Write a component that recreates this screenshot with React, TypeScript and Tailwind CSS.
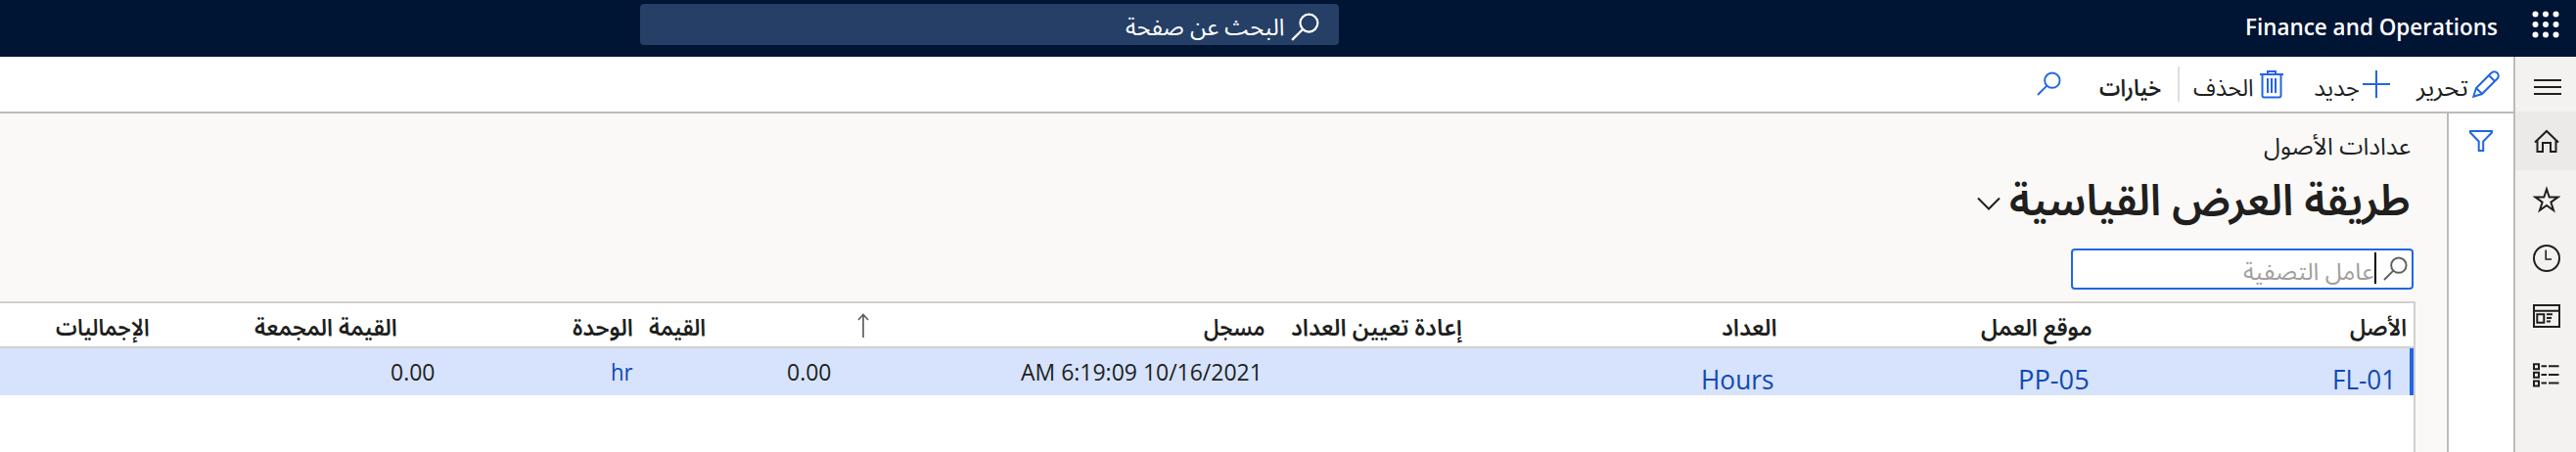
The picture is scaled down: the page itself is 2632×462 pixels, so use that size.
import { useLayoutEffect, useRef, type ReactNode } from "react";

const AR = "font-['Open_Sans','Noto_Sans_Arabic','DejaVu_Sans',sans-serif]";

/** Single line of text stretched or condensed to an exact width. */
function Fit({ w, className = "", children }: { w: number; className?: string; children: ReactNode }) {
  const ref = useRef<HTMLSpanElement>(null);
  useLayoutEffect(() => {
    const el = ref.current;
    if (el) el.style.transform = `scaleX(${w / el.offsetWidth})`;
  }, [w]);
  return (
    <span className={`flex shrink-0 whitespace-nowrap ${className}`} style={{ width: w }}>
      <span ref={ref} className="block shrink-0 origin-right">
        {children}
      </span>
    </span>
  );
}

function Search({ className, sw }: { className: string; sw: number }) {
  return (
    <svg viewBox="0 0 26 26" className={className} fill="none" stroke="currentColor" strokeWidth={sw}>
      <circle cx="16.5" cy="9.5" r="8" />
      <path d="M10.8 15.2 1 25" />
    </svg>
  );
}

const line = { fill: "none", stroke: "currentColor", strokeWidth: 2 } as const;

const columns = [
  { h: "الأصل", hw: 58, col: "w-[322px]", hp: "ps-[7px]", v: "FL-01", vw: 65, vp: "ps-[18px]", kind: "link" },
  { h: "موقع العمل", hw: 114, col: "w-[322px]", hp: "ps-[6px]", v: "PP-05", vw: 73, vp: "ps-[9px]", kind: "link" },
  { h: "العداد", hw: 57, col: "w-[322px]", hp: "ps-[6px]", v: "Hours", vw: 74, vp: "ps-[10px]", kind: "link" },
  { h: "إعادة تعيين العداد", hw: 175, col: "w-[202px]", hp: "ps-[6px]", v: "", vw: 0, vp: "", kind: "text" },
  { h: "مسجل", hw: 62, col: "w-[428px]", hp: "ps-[6px]", v: "AM 6:19:09 10/16/2021", vw: 247, vp: "ps-[8px]", kind: "text" },
  { h: "القيمة", hw: 58, col: "w-[217px]", hp: "ps-[149px]", v: "0.00", vw: 45, vp: "ps-[21px]", kind: "text" },
  { h: "الوحدة", hw: 62, col: "w-[203px]", hp: "ps-[6px]", v: "hr", vw: 23, vp: "ps-[6px]", kind: "lookup" },
  { h: "القيمة المجمعة", hw: 146, col: "w-[291px]", hp: "ps-[44px]", v: "0.00", vw: 45, vp: "ps-[6px]", kind: "text" },
  { h: "الإجماليات", hw: 96, col: "w-[159px]", hp: "ps-[6px]", v: "", vw: 0, vp: "", kind: "text" },
];

const valueStyle: Record<string, string> = {
  link: "pt-[14px] text-[28px] leading-[34px] text-[#0f4ab3]",
  text: "text-[24px] leading-[48px] text-[#201f1e]",
  lookup: "text-[24px] leading-[48px] text-[#0f4ab3]",
};

function TopBar() {
  return (
    <header className="flex h-[58px] bg-[#001433] text-white">
      <svg viewBox="0 0 28 28" className="ms-[17px] mt-[11px] size-7" fill="currentColor">
        {[3.5, 14, 24.5].map((y) => [3.5, 14, 24.5].map((x) => <circle key={`${x}-${y}`} cx={x} cy={y} r="3" />))}
      </svg>
      <Fit w={258} className="ms-[35px] text-[24px] leading-[54px] font-semibold">
        Finance and Operations
      </Fit>
      <div className="ms-[926px] mt-1 flex h-[42px] w-[714px] rounded bg-[#253f66]">
        <Search className="ms-[20px] mt-[9px] size-[29px]" sw={2} />
        <Fit w={162} className="ms-[7px] text-[24px] leading-[46px]">
          البحث عن صفحة
        </Fit>
      </div>
    </header>
  );
}

function NavRail() {
  return (
    <nav className="flex w-16 shrink-0 flex-col border-l-2 border-[#bebbb8] bg-[#f3f2f1] text-[#201f1e]">
      <div className="h-14 ps-[15px] pt-[22px]">
        <svg viewBox="0 0 28 18" className="h-[18px] w-7" {...line}>
          <path d="M0 2h28M0 9h28M0 16h28" />
        </svg>
      </div>
      <div className="h-[60px] bg-[#ebeae9] ps-[16px] pt-[17px]">
        <svg viewBox="0 0 28 28" className="size-7" {...line}>
          <path d="M2 14.500 14 3l12 11.500M4.500 12.500V24h5.500v-9h8v9h5.500V12.500" />
        </svg>
      </div>
      <div className="h-[60px] ps-[16px] pt-[16px]">
        <svg viewBox="0 0 28 28" className="size-7" {...line}>
          <path d="M14 3.300 16.700 11.600H25.400L18.400 16.700 21.050 25 14 19.900 6.950 25 9.600 16.700 2.600 11.600H11.300Z" />
        </svg>
      </div>
      <div className="h-[60px] ps-[16px] pt-[16px]">
        <svg viewBox="0 0 28 28" className="size-7" {...line}>
          <circle cx="14" cy="14" r="13" />
          <path d="M13.200 5.500V15H19" strokeWidth="1.600" />
        </svg>
      </div>
      <div className="h-[60px] ps-[16px] pt-[17px]">
        <svg viewBox="0 0 28 24" className="h-6 w-7" {...line}>
          <path d="M1 1h26v22H1zM1 6.700h26M4.300 10.300h7v8.400h-7zM14 10.300h6M14 14h5M14 17.500h4" />
        </svg>
      </div>
      <div className="h-[60px] ps-[16px] pt-[17px]">
        <svg viewBox="0 0 28 26" className="h-[26px] w-7" {...line}>
          <path d="M1 1.200h5v5h-5zM1 9.700h5v5h-5zM1 18.400h5v5h-5zM8.500 3.200h5.500M16 3.200h10.500M8.500 11.900h5.500M16 11.900h10.500M8.500 20.500h5.500M16 20.500h10.500" />
        </svg>
      </div>
    </nav>
  );
}

function Toolbar() {
  return (
    <div className="flex h-[58px] shrink-0 border-b-2 border-[#bebbb8] bg-white text-[24px] leading-[62px] text-[#201f1e]">
      <svg viewBox="0 0 28 28" className="ms-[14px] mt-[14px] size-7 text-[#2266e3]" {...line}>
        <path d="M1.300 26.700 4 18 19.500 2.500a4.200 4.200 0 0 1 6 6L10 24ZM17 5l6 6M4 18l6 6" />
      </svg>
      <Fit w={53} className="ms-[4px]">تحرير</Fit>
      <svg viewBox="0 0 28 28" className="ms-[27px] mt-[14px] size-7 text-[#2266e3]" {...line}>
        <path d="M14 0v28M0 14h28" />
      </svg>
      <Fit w={47} className="ms-[3px]">جديد</Fit>
      <svg viewBox="0 0 24 30" className="ms-[31px] mt-[13px] h-[30px] w-6 text-[#2266e3]" {...line}>
        <path d="M0 5h24M2.500 5v21.500a2 2 0 0 0 2 2h15a2 2 0 0 0 2-2V5M8 5V2h8v3M8 9v15M12 9v15M16 9v15" />
      </svg>
      <Fit w={62} className="ms-[6px]">الحذف</Fit>
      <div className="ms-[14px] mt-[10px] h-9 w-0.5 bg-[#e1dfdd]" />
      <Fit w={63} className="ms-[17px] font-semibold">خيارات</Fit>
      <Search className="ms-[39px] mt-[15px] size-[25px] text-[#2266e3]" sw={2} />
    </div>
  );
}

function Grid() {
  return (
    <section className="h-[154px] w-[2468px] overflow-hidden border-t-2 border-r-2 border-[#d2d0ce] bg-white">
      <div className="flex h-[46px] border-b-2 border-[#d2d0ce] text-[24px] leading-[47px] font-semibold text-[#201f1e]">
        {columns.map((c) => (
          <div key={c.h} className={`flex shrink-0 ${c.col} ${c.hp}`}>
            <Fit w={c.hw}>{c.h}</Fit>
            {c.h === "مسجل" && (
              <svg viewBox="0 0 12 25" className="ms-auto me-[6px] mt-[10px] h-[25px] w-3 text-[#605e5c]" fill="none" stroke="currentColor" strokeWidth="1.700">
                <path d="M6 25V1.500M1 7l5-5.500L11 7" />
              </svg>
            )}
          </div>
        ))}
      </div>
      <div className="flex h-12 bg-[#d7e3fc] shadow-[inset_-4px_0_0_#2266e3]">
        {columns.map((c) => (
          <div key={c.h} className={`flex shrink-0 ${c.col} ${c.vp}`}>
            {c.v && (
              <Fit w={c.vw} className={valueStyle[c.kind]}>
                <bdi dir="ltr">{c.v}</bdi>
              </Fit>
            )}
          </div>
        ))}
      </div>
    </section>
  );
}

export default function App() {
  return (
    <div dir="rtl" className={`h-[462px] w-[2632px] overflow-hidden bg-[#faf9f8] ${AR}`}>
      <TopBar />
      <div className="flex h-[404px]">
        <NavRail />
        <div className="flex w-[2568px] flex-col">
          <Toolbar />
          <div className="flex flex-1">
            <aside className="w-[68px] shrink-0 border-l-2 border-[#bebbb8] bg-white">
              <svg viewBox="0 0 24 22" className="ms-[21px] mt-[17px] h-[22px] w-6 text-[#2266e3]" {...line}>
                <path d="M1 1h22v1.500L14.200 11.500V21h-4.500V11.500L1 2.500Z" />
              </svg>
            </aside>
            <main className="w-[2500px] pe-[32px]">
              <div className="flex h-[62px] ps-[37px] text-[24px] leading-[66px] text-[#201f1e]">
                <Fit w={150}>عدادات الأصول</Fit>
              </div>
              <div className="flex h-[76px] ps-[37px] text-[#201f1e]">
                <Fit w={410} className="text-[44px] leading-[50px] font-semibold">طريقة العرض القياسية</Fit>
                <svg viewBox="0 0 24 14" className="ms-[9px] mt-[23px] h-[14px] w-6" {...line}>
                  <path d="M1 1.500 12 12.500 23 1.500" />
                </svg>
              </div>
              <div className="ms-[34px] flex h-[42px] w-[350px] rounded border-2 border-[#2266e3] bg-white">
                <Search className="ms-[4px] mt-[6px] size-[25px] text-[#605e5c]" sw={2} />
                <div className="ms-[7px] mt-[2px] h-8 w-0.5 bg-black" />
                <Fit w={134} className="text-[24px] leading-[42px] text-[#a19f9d]">عامل التصفية</Fit>
              </div>
              <div className="-me-[32px] mt-3 ps-[32px]">
                <Grid />
              </div>
            </main>
          </div>
        </div>
      </div>
    </div>
  );
}
